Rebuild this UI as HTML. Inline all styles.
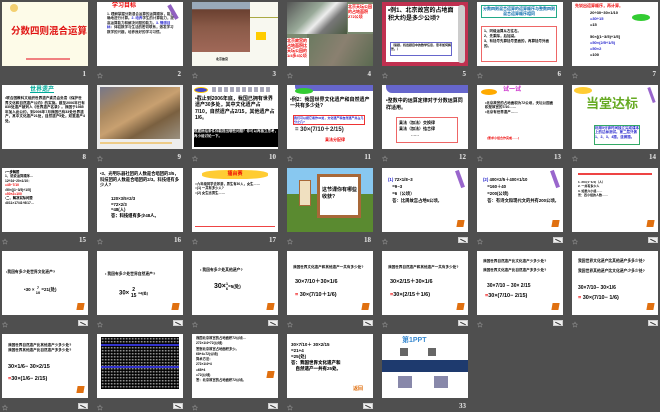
<!DOCTYPE html>
<html><head><meta charset="utf-8"><style>
*{margin:0;padding:0;box-sizing:border-box}
body{width:660px;height:411px;background:#4f4f4f;position:relative;overflow:hidden;font-family:"Liberation Sans","Noto Sans CJK SC",sans-serif}
.s{position:absolute;width:86px;height:64px;background:#fff;overflow:hidden;font-size:5px;line-height:6px;color:#000;font-weight:bold}
.n{position:absolute;color:#e8e8e8;font-size:7px;font-family:"Liberation Serif",serif;font-weight:bold;text-align:right;width:20px}
.st{position:absolute;color:#ccc;font-size:6px}
.ic{position:absolute;width:10px;height:6px;background:#eee;border:1px solid #ccc}
.ic:after{content:"";position:absolute;left:1px;top:2px;width:6px;height:1px;background:#333;transform:rotate(25deg)}
.a{position:absolute}
.b{font-weight:bold}
.r{color:#e00}
.br{position:absolute;right:4px;bottom:5px;width:7px;height:7px;background:#e07010;transform:skew(-10deg)}
</style></head><body>

<!-- Row 1 -->
<div class="s" style="left:2px;top:2px;background:#fdfbe8">
 <div class="a b" style="left:9px;top:22px;font-size:9.5px;line-height:12px;white-space:nowrap;color:#e01010;font-family:'Noto Sans CJK SC',sans-serif">分数四则混合运算</div>
 <div class="a" style="left:8px;top:2px;width:8px;height:8px;border-radius:50%;background:#f4d070"></div>
 <div class="a" style="left:24px;top:56px;width:44px;height:2px;background:#f08080"></div>
</div>
<div class="s" style="left:97px;top:2px">
 <div class="a b r" style="left:15px;top:1px;font-size:6px">学习目标</div>
 <div class="a" style="left:10px;top:10px;width:68px;font-size:3.5px;line-height:4.4px;color:#222">1. 理解掌握分数混合运算的运算顺序，能正确地进行计算。<span style="color:#22c">2. 培养</span>学生的计算能力，提高运算能力和解决问题的能力。<span style="color:#22c">3. 情感目标</span>：体验数学与生活的密切联系，激发学习数学的兴趣，培养良好的学习习惯。</div>
 <div class="a" style="left:74px;top:2px;width:4px;height:16px;background:#9060c0;transform:rotate(-30deg)"></div>
</div>
<div class="s" style="left:192px;top:2px;background:#f8f8f0">
 <div class="a" style="left:0;top:0;width:58px;height:50px;background:linear-gradient(#9ab 0,#9ab 14%,#6a4030 15%,#8a5a48 50%,#a06858 100%)"></div>
 <div class="a" style="left:58px;top:15px;width:28px;height:1px;background:#aa4"></div>
 <div class="a" style="left:64px;top:30px;width:10px;height:8px;background:#fc0"></div>
 <div class="a" style="left:24px;top:54px;font-size:3px">北京故宫</div>
</div>
<div class="s" style="left:287px;top:2px;background:#7a8a70">
 <div class="a" style="left:0;top:0;width:60px;height:32px;background:linear-gradient(135deg,#555 0,#9a9 40%,#eee 55%,#777 70%,#4a5a40 100%)"></div>
 <div class="a" style="left:20px;top:32px;width:66px;height:32px;background:linear-gradient(120deg,#6a7a60,#8a8070,#5a6a50)"></div>
 <div class="a b r" style="left:61px;top:2px;width:25px;height:28px;background:#fff;font-size:4px;line-height:5px">北京天坛公园的占地面积272公顷</div>
 <div class="a b r" style="left:0px;top:36px;width:22px;height:28px;background:#fff;font-size:4px;line-height:5px">北京故宫的占地面积比天坛公园的1/4多4公顷</div>
</div>
<div class="s" style="left:382px;top:2px;background:#c03050">
 <div class="a" style="left:4px;top:4px;width:74px;height:56px;background:#fff"></div>
 <div class="a b" style="left:6px;top:6px;width:68px;font-size:6px;line-height:7.5px">•例1、北京故宫的占地面积大约是多少公顷?</div>
 <div class="a" style="left:8px;top:40px;width:62px;height:14px;border:1px solid #66c;font-size:3px;line-height:4px">（读题，找出题目中的数学信息，思考如何解答。）</div>
 <div class="a" style="left:76px;top:3px;width:7px;height:58px;background:#ccc;border-radius:3px"></div>
</div>
<div class="s" style="left:477px;top:2px">
 <div class="a b" style="left:4px;top:3px;width:76px;height:13px;border:1px solid #2a8;font-size:4px;line-height:5px;color:#06a;text-align:center">分数四则混合运算的运算顺序与整数四则混合运算顺序相同</div>
 <div class="a" style="left:4px;top:24px;width:76px;height:36px;border:1px solid #e66;font-size:3.5px;line-height:5px;padding:2px">1、同级运算从左往右。<br>2、先乘除，后加减。<br>3、有括号先算括号里面的，再算括号外面的。</div>
</div>
<div class="s" style="left:572px;top:2px">
 <div class="a b r" style="left:3px;top:1px;font-size:4px">先说出运算顺序，再计算。</div>
 <div class="a" style="left:18px;top:8px;font-size:4px;line-height:6px">20÷30−30×1/10<br><span style="color:#22c">=30÷15</span><br>=15<br><br>50×[(1−3/5)÷1/5]<br><span style="color:#22c">=50×(2/5÷1/5)<br>=50×2</span><br>=100</div>
 <div class="a" style="left:60px;top:12px;width:18px;height:7px;border-radius:50%;background:#3c3"></div>
</div>

<!-- Row 2 -->
<div class="s" style="left:2px;top:85px">
 <div class="a b" style="left:28px;top:2px;font-size:6px;color:#0a9;text-decoration:underline">世界遗产</div>
 <div class="a b" style="left:3px;top:11px;width:80px;font-size:3.6px;line-height:4.6px">•联合国教科文组织世界遗产委员会负责《保护世界文化和自然遗产公约》的实施。截至2006年已有830处遗产被列入《世界遗产名录》。我国于1985年加入此公约，到2006年7月我国已有33处世界遗产，其中文化遗产21处，自然遗产5处，双重遗产4处。</div>
</div>
<div class="s" style="left:97px;top:85px;background:#eee">
 <div class="a" style="left:3px;top:2px;width:80px;height:52px;background:linear-gradient(150deg,#778 0,#a98860 30%,#c8a070 50%,#7a6040 70%,#9a9080 100%)"></div>
 <div class="a" style="left:3px;top:57px;width:72px;height:2px;background:#ec8"></div>
</div>
<div class="s" style="left:192px;top:85px">
 <div class="a" style="left:2px;top:2px;width:14px;height:6px;border-radius:50%;background:#44c;border:1px solid #fc0"></div>
 <div class="a" style="left:20px;top:2px;width:60px;height:5px;background:repeating-linear-gradient(90deg,#aab 0 4px,#fff 4px 6px)"></div>
 <div class="a b" style="left:3px;top:11px;width:80px;font-size:5px;line-height:6.3px">•截止到2006年底，我国已拥有世界遗产30多处，其中文化遗产占7/10，自然遗产占2/15，其他遗产占1/6。</div>
 <div class="a" style="left:2px;top:44px;width:84px;height:18px;background:#000;color:#fff;font-size:3.5px;line-height:4.5px">根据所给条件你能提出哪些问题？你可以再独立思考，再小组讨论一下。</div>
</div>
<div class="s" style="left:287px;top:85px">
 <div class="a" style="left:8px;top:0;width:78px;height:6px;background:#66c;border-radius:0 0 0 4px"></div>
 <div class="a" style="left:8px;top:3px;width:18px;height:6px;border-radius:50%;background:#3c3"></div>
 <div class="a b" style="left:3px;top:12px;width:80px;font-size:5px;line-height:6.3px">•例2：我国世界文化遗产和自然遗产一共有多少处?</div>
 <div class="a" style="left:6px;top:30px;width:72px;height:10px;border:1px solid #e33;font-size:3px;line-height:4px;color:#22c">我们可以把它看作30处，文化遗产和自然遗产共占几分之几?</div>
 <div class="a" style="left:8px;top:42px;font-size:6px;color:#222">= 30×(7/10＋2/15)</div>
 <div class="a b r" style="left:38px;top:52px;font-size:4px">乘法分配律</div>
</div>
<div class="s" style="left:382px;top:85px">
 <div class="a" style="left:4px;top:0;width:82px;height:8px;background:#66c;border-radius:0 0 0 6px"></div>
 <div class="a b" style="left:4px;top:13px;width:78px;font-size:5px;line-height:6.5px">•整数中的运算定律对于分数运算同样适用。</div>
 <div class="a" style="left:14px;top:32px;width:62px;height:26px;border:1px solid #e66;font-size:4px;line-height:6px;padding:2px">乘法（加法）交换律<br>乘法（加法）结合律<br>　　　……</div>
</div>
<div class="s" style="left:477px;top:85px">
 <div class="a" style="left:4px;top:4px;width:16px;height:6px;border-radius:50%;background:#fa0"></div>
 <div class="a b" style="left:26px;top:2px;font-size:6px;color:#c3c">试一试</div>
 <div class="a" style="left:8px;top:16px;width:70px;font-size:3.5px;line-height:4.4px">•北京故宫的占地面积为72公顷，天坛公园面积是故宫的7/10……<br>•北京有世界遗产……</div>
 <div class="a r" style="left:10px;top:50px;font-size:3px">(要求小组合作完成……)</div>
</div>
<div class="s" style="left:572px;top:85px">
 <div class="a" style="left:2px;top:2px;width:18px;height:7px;border-radius:50%;background:#fc3"></div>
 <div class="a b" style="left:14px;top:10px;font-size:13px;line-height:15px;color:#6a2;font-family:'Noto Sans CJK SC',sans-serif">当堂达标</div>
 <div class="a" style="left:22px;top:40px;width:46px;height:20px;border:1px solid #3a6;font-size:3.5px;line-height:4.4px;color:#22c">利用5分钟时间独立完成课本上的达标测试。第二层只做1、2、3、4题，连做题。</div>
 <div class="a" style="left:78px;top:2px;width:3px;height:16px;background:#96c;transform:rotate(-20deg)"></div>
</div>

<!-- Row 3 -->
<div class="s" style="left:2px;top:168px">
 <div class="a" style="left:3px;top:2px;width:80px;font-size:3.3px;line-height:4.4px">•<b>一步解题</b><br>1、说说运算顺序…<br>12÷24−20×1/10：<br><span class="r">=45−7/10</span><br>•50×[(1−3/5)÷1/5]<br><span class="r">=50×2=100</span><br>•<b>二、解决实际问题</b><br>•8/11×17/41÷8/17…</div>
</div>
<div class="s" style="left:97px;top:168px">
 <div class="a b" style="left:3px;top:3px;width:80px;font-size:4.3px;line-height:5.6px">•3、光明乐器社团的人数是合唱团的3/5，科技团的人数是合唱团的2/3。科技组有多少人?</div>
 <div class="a" style="left:14px;top:28px;font-size:4.3px;line-height:5.6px">120×3/5×2/3<br>=72×2/3<br>=48(人)<br><b>答：科技组有多少48人。</b></div>
</div>
<div class="s" style="left:192px;top:168px">
 <div class="a b r" style="left:10px;top:2px;width:66px;height:9px;background:#fc3;border-radius:40%;font-size:5px;text-align:center;line-height:9px">擂台赛</div>
 <div class="a" style="left:3px;top:14px;width:80px;font-size:3.3px;line-height:4.3px">□六年级同学去郊游，男生有30人，女生……<br>□(1) 一共有多少人?<br>□(2) 女生比男生……</div>
 <div class="a" style="left:3px;top:58px;width:80px;height:1px;background:#e44"></div>
</div>
<div class="s" style="left:287px;top:168px;background:#5a9040">
 <div class="a" style="left:0;top:0;width:86px;height:26px;background:#88c8f0"></div>
 <div class="a" style="left:0;top:26px;width:86px;height:38px;background:#5a8a30"></div>
 <div class="a" style="left:30px;top:6px;width:44px;height:44px;background:#fff;border:3px solid #a86838"></div>
 <div class="a b" style="left:35px;top:19px;width:36px;font-size:5px;line-height:7px">这节课你有哪些收获?</div>
 <div class="a" style="left:12px;top:12px;width:12px;height:26px;background:#f0e0c0;border:1px solid #a86838"></div>
</div>
<div class="s" style="left:382px;top:168px">
 <div class="a" style="left:6px;top:8px;font-size:4.3px;line-height:7px"><span style="color:#22c">(1)</span> 72×1/8−3<br>　=9−3<br>　=6（公顷）<br>　答：比周故宫占地6公顷。</div>
 <div class="a" style="left:76px;top:2px;width:4px;height:18px;background:#96c;transform:rotate(-20deg)"></div>
 <div class="br"></div>
</div>
<div class="s" style="left:477px;top:168px">
 <div class="a" style="left:6px;top:8px;font-size:4.3px;line-height:7px"><span style="color:#22c">(2)</span> 400×2/5＋400×1/10<br>　=160＋40<br>　=200(公顷)<br>　答：有诗文和现代文的共有200公顷。</div>
 <div class="a" style="left:76px;top:2px;width:4px;height:18px;background:#96c;transform:rotate(-20deg)"></div>
 <div class="br"></div>
</div>
<div class="s" style="left:572px;top:168px">
 <div class="a" style="left:6px;top:5px;width:74px;height:2px;background:#e44"></div>
 <div class="a" style="left:6px;top:12px;width:74px;font-size:3px;line-height:4.3px">1. 20×(1−1/4)（人）<br>2. 一共有多少人<br>3. 如果六小组……<br>答：四小组的人数……</div>
 <div class="br"></div>
</div>

<!-- Row 4 -->
<div class="s" style="left:2px;top:251px">
 <div class="a" style="left:4px;top:18px;font-size:3.8px">•我国有多少处世界文化遗产?</div>
 <div class="a" style="left:22px;top:34px;font-size:4.5px">•30 × <span style="display:inline-block;text-align:center;vertical-align:middle;line-height:5px;font-size:4px">7<br>10</span> =21(处)</div>
 <div class="br"></div>
</div>
<div class="s" style="left:97px;top:251px">
 <div class="a" style="left:8px;top:20px;font-size:3.8px">• 我国有多少处世界自然遗产?</div>
 <div class="a" style="left:22px;top:36px;font-size:6px">30× <span style="display:inline-block;text-align:center;vertical-align:middle;line-height:6px;font-size:5px">2<br>15</span> <span style="font-size:3.5px">=4(处)</span></div>
 <div class="br"></div>
</div>
<div class="s" style="left:192px;top:251px">
 <div class="a" style="left:8px;top:16px;font-size:3.8px">• 我国有多少处其他遗产?</div>
 <div class="a" style="left:22px;top:30px;font-size:7px">30×<span style="display:inline-block;text-align:center;vertical-align:middle;line-height:5px;font-size:4px">1<br>6</span><span style="font-size:4.5px">=5(处)</span></div>
 <div class="br"></div>
</div>
<div class="s" style="left:287px;top:251px">
 <div class="a b" style="left:6px;top:14px;width:74px;font-size:3.6px;line-height:4.5px">我国世界文化遗产和其他遗产一共有多少处?</div>
 <div class="a" style="left:8px;top:28px;font-size:5.5px">30×7/10＋30×1/6</div>
 <div class="a" style="left:8px;top:41px;font-size:5.5px"><span class="r b">=</span> 30×(7/10＋1/6)</div>
 <div class="br"></div>
</div>
<div class="s" style="left:382px;top:251px">
 <div class="a b" style="left:6px;top:14px;width:74px;font-size:3.6px;line-height:4.5px">我国世界自然遗产和其他遗产一共有多少处?</div>
 <div class="a" style="left:8px;top:28px;font-size:5.5px">30×2/15＋30×1/6</div>
 <div class="a" style="left:8px;top:41px;font-size:5.5px"><span class="r b">=</span>30×(2/15＋1/6)</div>
 <div class="br"></div>
</div>
<div class="s" style="left:477px;top:251px">
 <div class="a b" style="left:6px;top:8px;width:74px;font-size:3.6px;line-height:4.6px">我国世界自然遗产比文化遗产少多少处?<br><br>我国世界文化遗产比自然遗产多多少处?</div>
 <div class="a" style="left:10px;top:32px;font-size:5px">30×7/10 − 30× 2/15</div>
 <div class="a" style="left:8px;top:42px;font-size:5.5px"><span class="r b">=</span>30×(7/10− 2/15)</div>
 <div class="br"></div>
</div>
<div class="s" style="left:572px;top:251px">
 <div class="a b" style="left:6px;top:8px;width:74px;font-size:3.8px;line-height:4.8px">我国世界文化遗产比其他遗产多多少处?<br><br>我国世界其他遗产比文化遗产少多少处?</div>
 <div class="a" style="left:6px;top:34px;font-size:5px">30×7/10− 30×1/6</div>
 <div class="a" style="left:6px;top:44px;font-size:5.5px"><span class="r b">=</span> 30×(7/10− 1/6)</div>
 <div class="br"></div>
</div>

<!-- Row 5 -->
<div class="s" style="left:2px;top:334px">
 <div class="a b" style="left:6px;top:9px;width:74px;font-size:3.6px;line-height:4.6px">我国世界自然遗产比其他遗产少多少处?<br>我国世界其他遗产比自然遗产多多少处?</div>
 <div class="a" style="left:6px;top:30px;font-size:5.5px">30×1/6− 30×2/15</div>
 <div class="a" style="left:6px;top:42px;font-size:5.5px"><span class="r b">=</span>30×(1/6− 2/15)</div>
 <div class="br"></div>
</div>
<div class="s" style="left:97px;top:334px">
 <div class="a" style="left:4px;top:3px;width:78px;height:52px;background:repeating-linear-gradient(0deg,#111 0 1px,#777 1px 2px,#eee 2px 3px),repeating-linear-gradient(90deg,#222 0 1px,#999 1px 2px,#555 2px 3px);background-blend-mode:multiply"></div>
 <div class="a" style="left:4px;top:10px;width:78px;height:2px;background:#33c"></div>
 <div class="a" style="left:4px;top:32px;width:78px;height:2px;background:#33c"></div>
</div>
<div class="s" style="left:192px;top:334px">
 <div class="a" style="left:4px;top:2px;width:78px;font-size:3.3px;line-height:5.3px">我国北京故宫的占地面积72公顷…<br>272×1/4+72(公顷)<br>答案北京故宫占地面积多少。<br>68+4=72(公顷)<br>算术方法：<br>272×1/4+4<br>=68+4<br>=72(公顷)<br>答：北京故宫的占地面积72公顷。</div>
 <div class="br" style="bottom:20px"></div>
</div>
<div class="s" style="left:287px;top:334px">
 <div class="a" style="left:4px;top:8px;font-size:4.5px;line-height:6px">30×7/10＋ 30×2/15<br>=21+4<br>=25(处)<br><b>答：我国世界文化遗产和<br>　自然遗产一共有25处。</b></div>
 <div class="a b" style="left:66px;top:52px;font-size:5px;color:#e07010">返回</div>
</div>
<div class="s" style="left:382px;top:334px">
 <div class="a b" style="left:20px;top:4px;font-size:7px;color:#3a8ad0">第1PPT</div>
 <div class="a" style="left:18px;top:14px;width:8px;height:8px;background:#666"></div>
 <div class="a" style="left:46px;top:14px;width:8px;height:8px;background:#666"></div>
 <div class="a" style="left:0;top:26px;width:86px;height:12px;background:#1e3a6e"></div>
 <div class="a" style="left:16px;top:42px;width:14px;height:12px;background:#88a"></div>
 <div class="a" style="left:52px;top:42px;width:14px;height:12px;background:#88a"></div>
</div>

<!-- Labels -->
<div class="n" style="left:66px;top:70px">1</div>
<div class="st" style="left:97px;top:71px">☆</div><div class="n" style="left:161px;top:70px">2</div>
<div class="st" style="left:192px;top:71px">☆</div><div class="n" style="left:256px;top:70px">3</div>
<div class="st" style="left:287px;top:71px">☆</div><div class="n" style="left:351px;top:70px">4</div>
<div class="st" style="left:382px;top:71px">☆</div><div class="n" style="left:446px;top:70px">5</div>
<div class="st" style="left:477px;top:71px">☆</div><div class="n" style="left:541px;top:70px">6</div>
<div class="st" style="left:572px;top:71px">☆</div><div class="n" style="left:636px;top:70px">7</div>

<div class="n" style="left:66px;top:153px">8</div>
<div class="st" style="left:97px;top:154px">☆</div><div class="n" style="left:161px;top:153px">9</div>
<div class="st" style="left:192px;top:154px">☆</div><div class="n" style="left:256px;top:153px">10</div>
<div class="st" style="left:287px;top:154px">☆</div><div class="n" style="left:351px;top:153px">11</div>
<div class="st" style="left:382px;top:154px">☆</div><div class="n" style="left:446px;top:153px">12</div>
<div class="st" style="left:477px;top:154px">☆</div><div class="n" style="left:541px;top:153px">13</div>
<div class="st" style="left:572px;top:154px">☆</div><div class="n" style="left:636px;top:153px">14</div>

<div class="st" style="left:2px;top:237px">☆</div><div class="n" style="left:66px;top:236px">15</div>
<div class="st" style="left:97px;top:237px">☆</div><div class="n" style="left:161px;top:236px">16</div>
<div class="st" style="left:192px;top:237px">☆</div><div class="n" style="left:256px;top:236px">17</div>
<div class="st" style="left:287px;top:237px">☆</div><div class="n" style="left:351px;top:236px">18</div>
<div class="st" style="left:382px;top:237px">☆</div><div class="ic" style="left:458px;top:237px"></div>
<div class="st" style="left:477px;top:237px">☆</div><div class="ic" style="left:553px;top:237px"></div>
<div class="st" style="left:572px;top:237px">☆</div><div class="ic" style="left:648px;top:237px"></div>

<div class="st" style="left:2px;top:320px">☆</div><div class="ic" style="left:78px;top:320px"></div>
<div class="st" style="left:97px;top:320px">☆</div><div class="ic" style="left:173px;top:320px"></div>
<div class="st" style="left:192px;top:320px">☆</div><div class="ic" style="left:268px;top:320px"></div>
<div class="st" style="left:287px;top:320px">☆</div><div class="ic" style="left:363px;top:320px"></div>
<div class="st" style="left:382px;top:320px">☆</div><div class="ic" style="left:458px;top:320px"></div>
<div class="st" style="left:477px;top:320px">☆</div><div class="ic" style="left:553px;top:320px"></div>
<div class="st" style="left:572px;top:320px">☆</div><div class="ic" style="left:648px;top:320px"></div>

<div class="st" style="left:2px;top:403px">☆</div><div class="ic" style="left:78px;top:403px"></div>
<div class="st" style="left:97px;top:403px">☆</div><div class="ic" style="left:173px;top:403px"></div>
<div class="st" style="left:192px;top:403px">☆</div><div class="ic" style="left:268px;top:403px"></div>
<div class="st" style="left:287px;top:403px">☆</div><div class="ic" style="left:363px;top:403px"></div>
<div class="n" style="left:446px;top:402px">33</div>
</body></html>
